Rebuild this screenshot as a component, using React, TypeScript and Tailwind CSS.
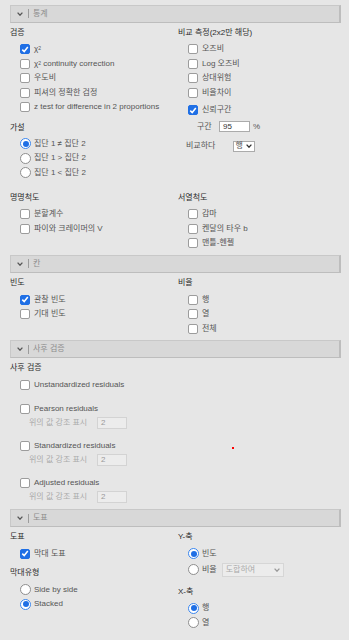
import type { ReactNode } from "react"

const Chevron = ({ className = "" }: { className?: string }) => (
  <svg width="6" height="4" viewBox="0 0 6 4" className={className}>
    <path d="M0.6 0.6 L3 3.2 L5.4 0.6" fill="none" stroke="currentColor" strokeWidth="1.3" />
  </svg>
)

const Header = ({ title }: { title: string }) => (
  <div className="flex h-[17.5px] items-center border border-[#c8c8c8] border-r-2 border-r-[#bdbdbd] border-b-[#bdbdbd] bg-[#d8d8d8] pl-[6px]">
    <Chevron className="text-[#555]" />
    <span className="ml-[5px] h-[9px] w-px bg-[#9c9c9c]" />
    <span className="ml-[4px] text-[#8c8c8c]">{title}</span>
  </div>
)

const Heading = ({ children }: { children: ReactNode }) => (
  <div className="flex h-[12px] items-center text-[#2c2c2c]">{children}</div>
)

const Box = ({ checked }: { checked?: boolean }) => (
  <span
    className={`flex h-[10px] w-[10px] shrink-0 items-center justify-center rounded-[2px] border ${
      checked ? "border-[#1f6fe5] bg-[#1f6fe5]" : "border-[#9c9c9c] bg-white"
    }`}
  >
    {checked && (
      <svg viewBox="0 0 10 10" className="h-[9px] w-[9px]">
        <path d="M1.6 5.2 L4 7.6 L8.5 2" fill="none" stroke="white" strokeWidth="1.9" />
      </svg>
    )}
  </span>
)

const Check = ({ checked, label }: { checked?: boolean; label: ReactNode }) => (
  <div className="flex h-[14.5px] items-center pl-[10px]">
    <Box checked={checked} />
    <span className="ml-[4px] text-[#555]">{label}</span>
  </div>
)

const Dot = ({ checked }: { checked?: boolean }) => (
  <span
    className={`flex h-[11px] w-[11px] shrink-0 items-center justify-center rounded-full border bg-white ${
      checked ? "border-[#3a86ee]" : "border-[#8e8e8e]"
    }`}
  >
    {checked && <span className="h-[6px] w-[6px] rounded-full bg-[#1f6fe5]" />}
  </span>
)

const Radio = ({ checked, label }: { checked?: boolean; label: ReactNode }) => (
  <div className="flex h-[14.5px] items-center pl-[10px]">
    <Dot checked={checked} />
    <span className="ml-[3px] text-[#555]">{label}</span>
  </div>
)

const Highlight = () => (
  <div className="mt-[1px] flex h-[12px] items-center pl-[19px]">
    <span className="w-[68px] text-[#ababab]">위의 값 강조 표시</span>
    <span className="flex h-[12px] w-[30px] items-center border border-[#d3d3d3] bg-[#ececec] pl-[3px] text-[#999]">2</span>
  </div>
)

const Chi = ({ extra }: { extra?: string }) => (
  <span>
    χ<sup className="relative -top-[1px] text-[5px]">2</sup>
    {extra}
  </span>
)

export default function App() {
  return (
    <div className="relative h-[640px] w-[349px] overflow-hidden bg-[#e6e6e6] pl-[10px] pr-[8px] pt-[5px] font-['Liberation_Sans','Noto_Sans_CJK_KR',sans-serif] text-[8px] leading-none">
      {/* 통계 */}
      <Header title="통계" />
      <div className="grid grid-cols-[168px_1fr] pt-[4.5px]">
        <div>
          <Heading>검증</Heading>
          <div className="mt-[3px]">
            <Check checked label={<Chi />} />
            <Check label={<Chi extra=" continuity correction" />} />
            <Check label="우도비" />
            <Check label="피셔의 정확한 검정" />
            <Check label="z test for difference in 2 proportions" />
          </div>
          <div className="mt-[7px]">
            <Heading>가설</Heading>
          </div>
          <div className="mt-[3px]">
            <Radio checked label="집단 1 ≠ 집단 2" />
            <Radio label="집단 1 > 집단 2" />
            <Radio label="집단 1 < 집단 2" />
          </div>
        </div>
        <div>
          <Heading>비교 측정(2x2만 해당)</Heading>
          <div className="mt-[3px]">
            <Check label="오즈비" />
            <Check label="Log 오즈비" />
            <Check label="상대위험" />
            <Check label="비율차이" />
          </div>
          <div className="mt-[2.75px]">
            <Check checked label="신뢰구간" />
          </div>
          <div className="mt-[4px] flex h-[11px] items-center pl-[19px]">
            <span className="w-[22px] text-[#555]">구간</span>
            <span className="flex h-[11px] w-[31px] items-center border border-[#ababab] bg-white pl-[3px] text-[#333]">95</span>
            <span className="ml-[3px] text-[#555]">%</span>
          </div>
          <div className="mt-[8.5px] flex h-[11px] items-center pl-[8px]">
            <span className="w-[46.5px] text-[#555]">비교하다</span>
            <span className="flex h-[11px] w-[22px] items-center justify-between border border-[#ababab] bg-white px-[2px] text-[#555]">
              행
              <Chevron className="text-[#333]" />
            </span>
          </div>
        </div>
      </div>
      <div className="mt-[12px] grid grid-cols-[168px_1fr]">
        <div>
          <Heading>명명척도</Heading>
          <div className="mt-[3px]">
            <Check label="분할계수" />
            <Check label="파이와 크레이머의 V" />
          </div>
        </div>
        <div>
          <Heading>서열척도</Heading>
          <div className="mt-[3px]">
            <Check label="감마" />
            <Check label="켄달의 타우 b" />
            <Check label="맨틀-헨젤" />
          </div>
        </div>
      </div>

      {/* 칸 */}
      <div className="mt-[4.5px]">
        <Header title="칸" />
      </div>
      <div className="grid grid-cols-[168px_1fr] pt-[4.5px]">
        <div>
          <Heading>빈도</Heading>
          <div className="mt-[3.5px]">
            <Check checked label="관찰 빈도" />
            <Check label="기대 빈도" />
          </div>
        </div>
        <div>
          <Heading>비율</Heading>
          <div className="mt-[3.5px]">
            <Check label="행" />
            <Check label="열" />
            <Check label="전체" />
          </div>
        </div>
      </div>

      {/* 사후 검증 */}
      <div className="mt-[4.3px]">
        <Header title="사후 검증" />
      </div>
      <div className="pt-[4.5px]">
        <Heading>사후 검증</Heading>
        <div className="mt-[3.5px]">
          <Check label="Unstandardized residuals" />
        </div>
        <div className="mt-[9.5px]">
          <Check label="Pearson residuals" />
          <Highlight />
        </div>
        <div className="mt-[9.5px]">
          <Check label="Standardized residuals" />
          <Highlight />
        </div>
        <div className="mt-[9.5px]">
          <Check label="Adjusted residuals" />
          <Highlight />
        </div>
      </div>

      {/* 도표 */}
      <div className="mt-[6px]">
        <Header title="도표" />
      </div>
      <div className="grid grid-cols-[168px_1fr] pt-[4.5px]">
        <div>
          <Heading>도표</Heading>
          <div className="mt-[3px]">
            <Check checked label="막대 도표" />
          </div>
          <div className="mt-[6.5px]">
            <Heading>막대유형</Heading>
          </div>
          <div className="mt-[3px]">
            <Radio label="Side by side" />
            <Radio checked label="Stacked" />
          </div>
        </div>
        <div>
          <Heading>Y-축</Heading>
          <div className="mt-[3px]">
            <Radio checked label="빈도" />
          </div>
          <div className="mt-[2px] flex h-[14px] items-center pl-[10px]">
            <Dot />
            <span className="ml-[3px] w-[19.7px] text-[#555]">비율</span>
            <span className="flex h-[13.5px] w-[62px] items-center justify-between border border-[#d6d6d6] bg-[#ececec] pl-[3px] pr-[3px] text-[#aaa]">
              도합하여
              <Chevron className="text-[#999]" />
            </span>
          </div>
          <div className="mt-[9px]">
            <Heading>X-축</Heading>
          </div>
          <div className="mt-[3px]">
            <Radio checked label="행" />
            <Radio label="열" />
          </div>
        </div>
      </div>

      <span className="absolute left-[232px] top-[447px] h-[2px] w-[2px] bg-[#ff0000]" />
    </div>
  )
}
